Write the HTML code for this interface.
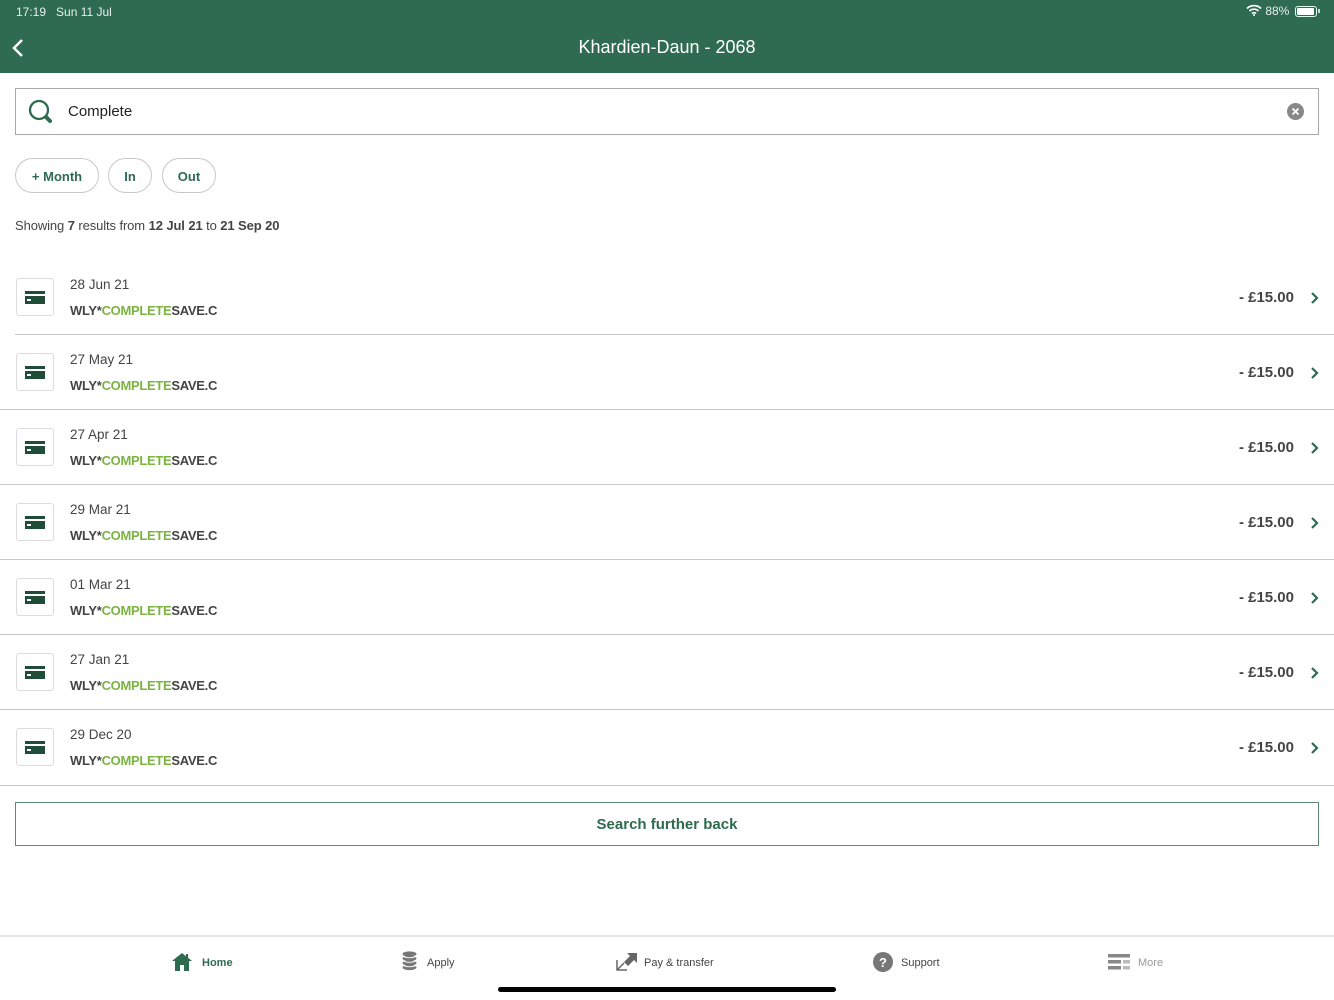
<!DOCTYPE html>
<html><head><meta charset="utf-8">
<style>
*{margin:0;padding:0;box-sizing:border-box}
body{width:1334px;height:1000px;position:relative;background:#fff;font-family:"Liberation Sans",sans-serif;overflow:hidden;color:#333}
.abs{position:absolute}
.hdr{left:0;top:0;width:1334px;height:73px;background:#2e6b50}
.status{color:#e8f0ec;font-size:12px;top:5px}
.title{left:0;width:1334px;top:37px;text-align:center;color:#fff;font-size:18px}
.search{left:15px;top:88px;width:1304px;height:47px;border:1px solid #a8a8a8}
.pill{top:158px;height:35px;border:1px solid #c8c8c8;border-radius:18px;color:#2e6b50;font-size:13px;font-weight:bold;text-align:center;line-height:35px}
.row{left:0;width:1334px;height:75px}
.sep{height:1px;background:#c9c9c9}
.ic{left:16px;top:18px;width:38px;height:38px;border:1px solid #dcdcdc;border-radius:3px}
.date{left:70px;top:17px;font-size:13.5px;color:#444}
.desc{left:70px;top:43px;font-size:13px;color:#444;font-weight:bold;letter-spacing:-0.3px}
.desc span{color:#7cb342}
.amt{right:40px;top:29px;font-size:15px;font-weight:bold;color:#444}
.nav{font-size:11px;color:#444;top:957px}
</style></head><body>
<div class="abs hdr"></div>
<div class="abs status" style="left:16px">17:19&nbsp;&nbsp;&nbsp;Sun 11 Jul</div>
<div class="abs status" style="left:1246px;top:4px">
<svg width="16" height="12" viewBox="0 0 16 12" style="vertical-align:-1px"><path d="M1 4.5a10 10 0 0 1 14 0M3.5 7a6.5 6.5 0 0 1 9 0M6 9.5a3 3 0 0 1 4 0" stroke="#fff" stroke-width="1.7" fill="none"/><circle cx="8" cy="11" r="1" fill="#fff"/></svg> 88%</div>
<div class="abs" style="left:1295px;top:6px;width:22px;height:11px;border:1px solid #dfe;border-radius:3px;padding:1px"><div style="width:17px;height:7px;background:#fff;border-radius:1px"></div></div>
<div class="abs" style="left:1318px;top:9px;width:2px;height:4px;background:#cdd"></div>
<svg class="abs" style="left:10px;top:38px" width="16" height="20" viewBox="0 0 16 20"><path d="M12 2L4 10l8 8" stroke="#fff" stroke-width="2.5" fill="none"/></svg>
<div class="abs title">Khardien-Daun - 2068</div>

<div class="abs search"></div>
<svg class="abs" style="left:28px;top:99px" width="26" height="26" viewBox="0 0 26 26"><circle cx="11" cy="11" r="9" stroke="#2e6b50" stroke-width="2.3" fill="none"/><path d="M18 18l4 4" stroke="#2e6b50" stroke-width="4" stroke-linecap="round"/></svg>
<div class="abs" style="left:68px;top:103px;font-size:15px;color:#222">Complete</div>
<svg class="abs" style="left:1287px;top:103px" width="17" height="17" viewBox="0 0 17 17"><circle cx="8.5" cy="8.5" r="8.5" fill="#888"/><path d="M5.5 5.5l6 6M11.5 5.5l-6 6" stroke="#fff" stroke-width="1.8"/></svg>

<div class="abs pill" style="left:15px;width:84px">+ Month</div>
<div class="abs pill" style="left:108px;width:44px">In</div>
<div class="abs pill" style="left:162px;width:54px">Out</div>

<div class="abs" style="left:15px;top:218px;font-size:13px;color:#444;letter-spacing:-0.1px">Showing <b>7</b> results from <b>12 Jul 21</b> to <b>21 Sep 20</b></div>

<div class="abs row" style="top:260px"><div class="abs ic"><div class="abs" style="left:8px;top:12px;width:20px;height:13px;background:#1f4d38"></div><div class="abs" style="left:8px;top:15px;width:20px;height:2px;background:#fff"></div><div class="abs" style="left:10px;top:20px;width:4px;height:2px;background:#fff"></div></div><div class="abs date">28 Jun 21</div><div class="abs desc">WLY*<span>COMPLETE</span>SAVE.C</div><div class="abs amt">- £15.00</div><svg class="abs" style="right:14px;top:31px" width="10" height="14" viewBox="0 0 10 14"><path d="M2 2l5 5-5 5" stroke="#2e6b50" stroke-width="2.2" fill="none"/></svg></div>
<div class="abs sep" style="left:15px;width:1319px;top:334px"></div>
<div class="abs row" style="top:335px"><div class="abs ic"><div class="abs" style="left:8px;top:12px;width:20px;height:13px;background:#1f4d38"></div><div class="abs" style="left:8px;top:15px;width:20px;height:2px;background:#fff"></div><div class="abs" style="left:10px;top:20px;width:4px;height:2px;background:#fff"></div></div><div class="abs date">27 May 21</div><div class="abs desc">WLY*<span>COMPLETE</span>SAVE.C</div><div class="abs amt">- £15.00</div><svg class="abs" style="right:14px;top:31px" width="10" height="14" viewBox="0 0 10 14"><path d="M2 2l5 5-5 5" stroke="#2e6b50" stroke-width="2.2" fill="none"/></svg></div>
<div class="abs sep" style="left:0;width:1334px;top:409px"></div>
<div class="abs row" style="top:410px"><div class="abs ic"><div class="abs" style="left:8px;top:12px;width:20px;height:13px;background:#1f4d38"></div><div class="abs" style="left:8px;top:15px;width:20px;height:2px;background:#fff"></div><div class="abs" style="left:10px;top:20px;width:4px;height:2px;background:#fff"></div></div><div class="abs date">27 Apr 21</div><div class="abs desc">WLY*<span>COMPLETE</span>SAVE.C</div><div class="abs amt">- £15.00</div><svg class="abs" style="right:14px;top:31px" width="10" height="14" viewBox="0 0 10 14"><path d="M2 2l5 5-5 5" stroke="#2e6b50" stroke-width="2.2" fill="none"/></svg></div>
<div class="abs sep" style="left:0;width:1334px;top:484px"></div>
<div class="abs row" style="top:485px"><div class="abs ic"><div class="abs" style="left:8px;top:12px;width:20px;height:13px;background:#1f4d38"></div><div class="abs" style="left:8px;top:15px;width:20px;height:2px;background:#fff"></div><div class="abs" style="left:10px;top:20px;width:4px;height:2px;background:#fff"></div></div><div class="abs date">29 Mar 21</div><div class="abs desc">WLY*<span>COMPLETE</span>SAVE.C</div><div class="abs amt">- £15.00</div><svg class="abs" style="right:14px;top:31px" width="10" height="14" viewBox="0 0 10 14"><path d="M2 2l5 5-5 5" stroke="#2e6b50" stroke-width="2.2" fill="none"/></svg></div>
<div class="abs sep" style="left:0;width:1334px;top:559px"></div>
<div class="abs row" style="top:560px"><div class="abs ic"><div class="abs" style="left:8px;top:12px;width:20px;height:13px;background:#1f4d38"></div><div class="abs" style="left:8px;top:15px;width:20px;height:2px;background:#fff"></div><div class="abs" style="left:10px;top:20px;width:4px;height:2px;background:#fff"></div></div><div class="abs date">01 Mar 21</div><div class="abs desc">WLY*<span>COMPLETE</span>SAVE.C</div><div class="abs amt">- £15.00</div><svg class="abs" style="right:14px;top:31px" width="10" height="14" viewBox="0 0 10 14"><path d="M2 2l5 5-5 5" stroke="#2e6b50" stroke-width="2.2" fill="none"/></svg></div>
<div class="abs sep" style="left:0;width:1334px;top:634px"></div>
<div class="abs row" style="top:635px"><div class="abs ic"><div class="abs" style="left:8px;top:12px;width:20px;height:13px;background:#1f4d38"></div><div class="abs" style="left:8px;top:15px;width:20px;height:2px;background:#fff"></div><div class="abs" style="left:10px;top:20px;width:4px;height:2px;background:#fff"></div></div><div class="abs date">27 Jan 21</div><div class="abs desc">WLY*<span>COMPLETE</span>SAVE.C</div><div class="abs amt">- £15.00</div><svg class="abs" style="right:14px;top:31px" width="10" height="14" viewBox="0 0 10 14"><path d="M2 2l5 5-5 5" stroke="#2e6b50" stroke-width="2.2" fill="none"/></svg></div>
<div class="abs sep" style="left:0;width:1334px;top:709px"></div>
<div class="abs row" style="top:710px"><div class="abs ic"><div class="abs" style="left:8px;top:12px;width:20px;height:13px;background:#1f4d38"></div><div class="abs" style="left:8px;top:15px;width:20px;height:2px;background:#fff"></div><div class="abs" style="left:10px;top:20px;width:4px;height:2px;background:#fff"></div></div><div class="abs date">29 Dec 20</div><div class="abs desc">WLY*<span>COMPLETE</span>SAVE.C</div><div class="abs amt">- £15.00</div><svg class="abs" style="right:14px;top:31px" width="10" height="14" viewBox="0 0 10 14"><path d="M2 2l5 5-5 5" stroke="#2e6b50" stroke-width="2.2" fill="none"/></svg></div>
<div class="abs sep" style="left:0;width:1334px;top:785px"></div>

<div class="abs" style="left:15px;top:802px;width:1304px;height:44px;border:1px solid #5d8a73;text-align:center;line-height:44px;font-size:15px;color:#2e6b50;font-weight:bold">Search further back</div>

<div class="abs" style="left:0;top:935px;width:1334px;height:2px;background:#e4e4e4"></div>
<svg class="abs" style="left:172px;top:952px" width="20" height="19" viewBox="0 0 20 19"><path d="M10 1L0 9h3v10h5v-6h4v6h5V9h3L16 5.8V2h-2v2.2z" fill="#2e6b50"/></svg>
<div class="abs nav" style="left:202px;color:#2e6b50;font-weight:bold">Home</div>
<svg class="abs" style="left:402px;top:951px" width="15" height="21" viewBox="0 0 15 21"><g fill="#777"><ellipse cx="7.5" cy="3" rx="7" ry="2.6"/><ellipse cx="7.5" cy="7.5" rx="7" ry="2.6"/><ellipse cx="7.5" cy="12" rx="7" ry="2.6"/><ellipse cx="7.5" cy="16.5" rx="7" ry="2.6"/></g><g stroke="#fff" stroke-width="0.9" fill="none"><path d="M.5 5.3q7 3 14 0M.5 9.8q7 3 14 0M.5 14.3q7 3 14 0"/></g></svg>
<div class="abs nav" style="left:427px">Apply</div>
<svg class="abs" style="left:616px;top:952px" width="22" height="19" viewBox="0 0 22 19"><path d="M11 1h10v10l-3-3-6 6-4-4 6-6z" fill="#666"/><path d="M1 8v10h10M1 18l7-7" stroke="#666" stroke-width="1.5" fill="none"/></svg>
<div class="abs nav" style="left:644px">Pay &amp; transfer</div>
<svg class="abs" style="left:873px;top:952px" width="20" height="20" viewBox="0 0 20 20"><circle cx="10" cy="10" r="10" fill="#777"/><text x="10" y="15" text-anchor="middle" font-family="Liberation Sans" font-weight="bold" font-size="13" fill="#fff">?</text></svg>
<div class="abs nav" style="left:901px">Support</div>
<svg class="abs" style="left:1108px;top:954px" width="22" height="16" viewBox="0 0 22 16"><g fill="#888"><rect x="0" y="0" width="22" height="3.5"/><rect x="0" y="6" width="13" height="3.5"/><rect x="15" y="6" width="7" height="3.5" fill="#bbb"/><rect x="0" y="12" width="13" height="3.5"/><rect x="15" y="12" width="7" height="3.5" fill="#bbb"/></g></svg>
<div class="abs nav" style="left:1138px;color:#999">More</div>
<div class="abs" style="left:498px;top:987px;width:338px;height:5px;border-radius:3px;background:#000"></div>
</body></html>
